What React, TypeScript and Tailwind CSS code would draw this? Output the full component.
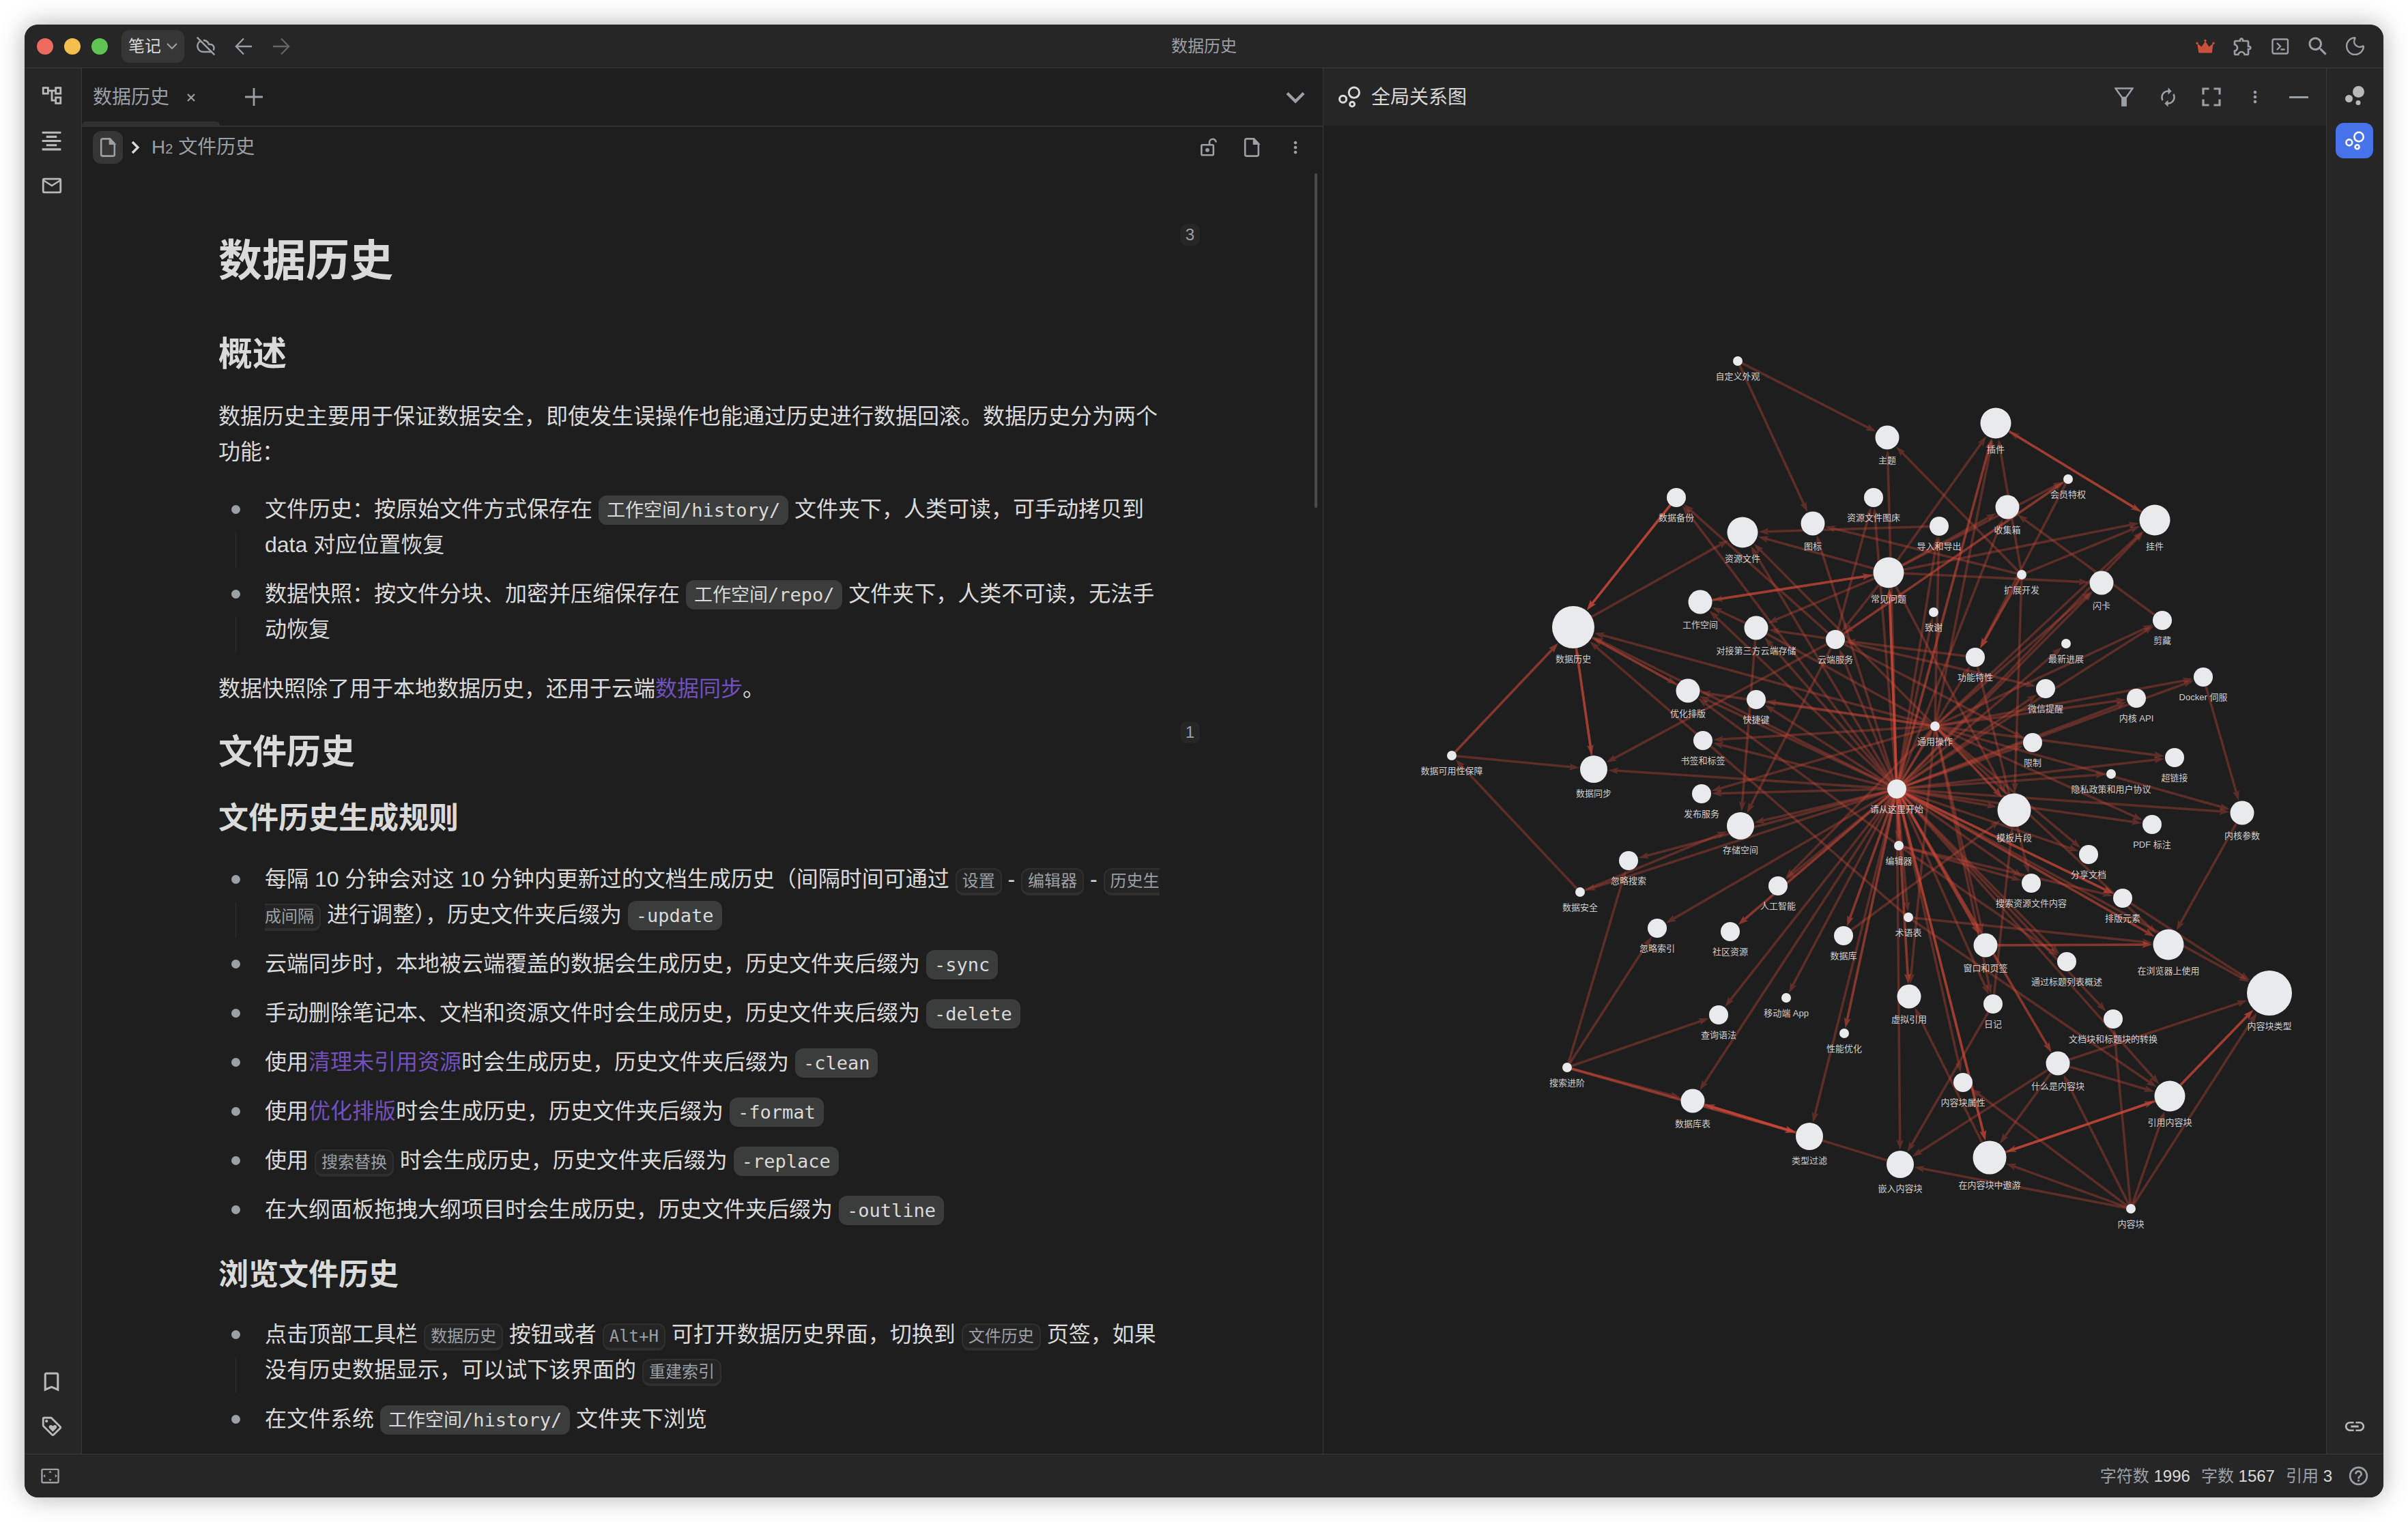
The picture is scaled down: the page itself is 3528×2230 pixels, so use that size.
import type { ReactNode } from "react";
import { CloudOff, Moon } from "lucide-react";

const ICONS = {
  tree: "M22 11V3h-7v3H9V3H2v8h7V8h2v10h4v3h7v-8h-7v3h-2V8h2v3h7zM7 9H4V5h3v4zm10 6h3v4h-3v-4zm0-10h3v4h-3V5z",
  outline: "M7 15v2h10v-2H7zm-4 6h18v-2H3v2zm0-8h18v-2H3v2zm4-6v2h10V7H7zM3 3v2h18V3H3z",
  mail: "M22 6c0-1.1-.9-2-2-2H4c-1.1 0-2 .9-2 2v12c0 1.1.9 2 2 2h16c1.1 0 2-.9 2-2V6zm-2 0l-8 5-8-5h16zm0 12H4V8l8 5 8-5v10z",
  bookmark: "M17 3H7c-1.1 0-1.99.9-1.99 2L5 21l7-3 7 3V5c0-1.1-.9-2-2-2zm0 15l-5-2.18L7 18V5h10v13z",
  tag: "M21.41 11.58l-9-9C12.05 2.22 11.55 2 11 2H4c-1.1 0-2 .9-2 2v7c0 .55.22 1.05.59 1.42l9 9c.36.36.86.58 1.41.58s1.05-.22 1.41-.59l7-7c.37-.36.59-.86.59-1.41s-.23-1.06-.59-1.42zM13 20.01L4 11V4h7v-.01l9 9-7 7.02zM6.5 5a1.5 1.5 0 1 0 0 3a1.5 1.5 0 1 0 0-3zM8.9 12.55c0 .57.23 1.07.6 1.45l3.5 3.5 3.5-3.5c.37-.37.6-.89.6-1.45 0-1.13-.92-2.05-2.05-2.05-.57 0-1.08.23-1.45.6l-.6.6-.6-.59c-.37-.38-.89-.61-1.45-.61-1.13 0-2.05.92-2.05 2.05z",
  link: "M3.9 12c0-1.71 1.39-3.1 3.1-3.1h4V7H7c-2.76 0-5 2.24-5 5s2.24 5 5 5h4v-1.9H7c-1.71 0-3.1-1.39-3.1-3.1zM8 13h8v-2H8v2zm9-6h-4v1.9h4c1.71 0 3.1 1.39 3.1 3.1s-1.39 3.1-3.1 3.1h-4V17h4c2.76 0 5-2.24 5-5s-2.24-5-5-5z",
  puzzle: "M10.5 4.5c.28 0 .5.22.5.5v2h6v6h2c.28 0 .5.22.5.5s-.22.5-.5.5h-2v6h-2.12c-.68-1.75-2.39-3-4.38-3s-3.7 1.25-4.38 3H4v-2.12c1.75-.68 3-2.39 3-4.38 0-1.99-1.24-3.7-2.99-4.38L4 7h6V5c0-.28.22-.5.5-.5m0-2C9.12 2.5 8 3.62 8 5H4c-1.1 0-1.99.9-1.99 2v3.8h.29c1.49 0 2.7 1.21 2.7 2.7s-1.21 2.7-2.7 2.7H2V20c0 1.1.9 2 2 2h3.8v-.3c0-1.49 1.21-2.7 2.7-2.7s2.7 1.21 2.7 2.7v.3H17c1.1 0 2-.9 2-2v-4c1.38 0 2.5-1.12 2.5-2.5S20.38 11 19 11V7c0-1.1-.9-2-2-2h-4c0-1.38-1.12-2.5-2.5-2.5z",
  search: "M15.5 14h-.79l-.28-.27C15.41 12.59 16 11.11 16 9.5 16 5.91 13.09 3 9.5 3S3 5.91 3 9.5 5.91 16 9.5 16c1.61 0 3.09-.59 4.23-1.57l.27.28v.79l5 4.99L20.49 19l-4.99-5zm-6 0C7.01 14 5 11.99 5 9.5S7.01 5 9.5 5 14 7.01 14 9.5 11.99 14 9.5 14z",
  refresh: "M12 6v3l4-4-4-4v3c-4.42 0-8 3.58-8 8 0 1.57.46 3.03 1.24 4.26L6.7 14.8c-.45-.83-.7-1.79-.7-2.8 0-3.31 2.69-6 6-6zm6.76 1.74L17.3 9.2c.44.84.7 1.79.7 2.8 0 3.31-2.69 6-6 6v-3l-4 4 4 4v-3c4.42 0 8-3.58 8-8 0-1.57-.46-3.03-1.24-4.26z",
  fullscreen: "M7 14H5v5h5v-2H7v-3zm-2-4h2V7h3V5H5v5zm12 7h-3v2h5v-5h-2v3zM14 5v2h3v3h2V5h-5z",
  more: "M12 8c1.1 0 2-.9 2-2s-.9-2-2-2-2 .9-2 2 .9 2 2 2zm0 2c-1.1 0-2 .9-2 2s.9 2 2 2 2-.9 2-2-.9-2-2-2zm0 6c-1.1 0-2 .9-2 2s.9 2 2 2 2-.9 2-2-.9-2-2-2z",
  help: "M11 18h2v-2h-2v2zm1-16C6.48 2 2 6.48 2 12s4.48 10 10 10 10-4.48 10-10S17.52 2 12 2zm0 18c-4.41 0-8-3.59-8-8s3.59-8 8-8 8 3.59 8 8-3.59 8-8 8zm0-14c-2.21 0-4 1.79-4 4h2c0-1.1.9-2 2-2s2 .9 2 2c0 2-3 1.75-3 5h2c0-2.25 3-2.5 3-5 0-2.21-1.79-4-4-4z",
  overscan: "M12.01 5.5L10 8h4l-1.99-2.5zM18 10v4l2.5-1.99L18 10zM6 10l-2.5 2.01L6 14v-4zm8 6h-4l2.01 2.5L14 16zm7-13H3c-1.1 0-2 .9-2 2v14c0 1.1.9 2 2 2h18c1.1 0 2-.9 2-2V5c0-1.1-.9-2-2-2zm0 16.01H3V4.99h18v14.02z",
};

function Icon({ name, size }: { name: keyof typeof ICONS; size: number }) {
  return (
    <svg width={size} height={size} viewBox="0 0 24 24" fill="currentColor" aria-hidden="true">
      <path d={ICONS[name]} />
    </svg>
  );
}

/** Line drawing in a 28-unit box. */
function Stroke({ size = 28, width = 2.4, children }: { size?: number; width?: number; children: ReactNode }) {
  return (
    <svg width={size} height={size} viewBox="0 0 28 28" fill="none" stroke="currentColor" strokeWidth={width} aria-hidden="true">
      {children}
    </svg>
  );
}

const GraphIcon = ({ size = 28 }: { size?: number }) => (
  <Stroke size={size} width={2.6}>
    <circle cx="20" cy="8.5" r="6.7" />
    <circle cx="5.8" cy="16.8" r="4.4" />
    <circle cx="17.6" cy="23.3" r="3" />
  </Stroke>
);

const FileIcon = () => (
  <Stroke width={2.6}>
    <path d="M17 1.4H6.2a2 2 0 0 0-2 2v21.200a2 2 0 0 0 2 2h15.600a2 2 0 0 0 2-2V8.500z" />
    <path d="M17 1.6v7.200h6.600z" fill="currentColor" />
  </Stroke>
);

function IconButton({ label, className = "", children }: { label: string; className?: string; children: ReactNode }) {
  return (
    <button type="button" aria-label={label} className={`flex h-12 shrink-0 items-center justify-center ${className}`}>
      {children}
    </button>
  );
}

function TopBar() {
  return (
    <header className="grid h-16 shrink-0 grid-cols-[1fr_auto_1fr] items-center border-b border-[#393939] bg-[#262626] text-[#9aa0a6]">
      <div className="flex items-center">
        <div className="flex gap-4 pl-[18px]">
          <button type="button" aria-label="关闭" className="size-6 rounded-full bg-[#ec6a5e]" />
          <button type="button" aria-label="最小化" className="size-6 rounded-full bg-[#f4bf4f]" />
          <button type="button" aria-label="缩放" className="size-6 rounded-full bg-[#61c554]" />
        </div>
        <button type="button" className="ml-5 flex h-12 w-[92px] items-center justify-center gap-2 rounded-xl bg-[#363636] text-2xl text-[#dadada]">
          笔记
          <svg width="16" height="10" viewBox="0 0 16 10" fill="none" stroke="#9aa0a6" strokeWidth="2.2" aria-hidden="true">
            <path d="M1 1l7 7 7-7" />
          </svg>
        </button>
        <div className="flex pl-1">
          <IconButton label="云端同步" className="w-[55px]">
            <CloudOff size={29} strokeWidth={2.1} />
          </IconButton>
          <IconButton label="后退" className="w-[55px]">
            <Stroke width={2.3}>
              <path d="M26 14H3M14 2.5L2.8 14 14 25.500" />
            </Stroke>
          </IconButton>
          <IconButton label="前进" className="w-[55px] text-[#62666a]">
            <Stroke width={2.3}>
              <path d="M2 14h23M14 2.500L25.200 14 14 25.500" />
            </Stroke>
          </IconButton>
        </div>
      </div>
      <div className="text-2xl">数据历史</div>
      <div className="flex justify-end pr-[14px]">
        <IconButton label="会员" className="w-[55px] text-[#c8503c]">
          <svg width="28" height="28" viewBox="0 0 28 28" fill="currentColor" aria-hidden="true">
            <path d="M4.200 23.500L2.300 9.500l6.200 5L14 6.500l5.500 8 6.200-5-1.900 14z" />
            <circle cx="2" cy="9.200" r="1.700" />
            <circle cx="14" cy="5.500" r="1.700" />
            <circle cx="26" cy="9.200" r="1.700" />
          </svg>
        </IconButton>
        <IconButton label="插件" className="w-[55px]">
          <Icon name="puzzle" size={32} />
        </IconButton>
        <IconButton label="命令面板" className="w-[55px]">
          <Stroke width={2.4}>
            <rect x="2.500" y="3.500" width="22.500" height="21" rx="2.200" />
            <path d="M9 9l5 5-5 5M14.500 18.500h6" />
          </Stroke>
        </IconButton>
        <IconButton label="搜索" className="w-[55px]">
          <Icon name="search" size={36} />
        </IconButton>
        <IconButton label="外观" className="w-[55px]">
          <Moon size={33} strokeWidth={1.8} />
        </IconButton>
      </div>
    </header>
  );
}

function DockButton({ label, active = false, children }: { label: string; active?: boolean; children: ReactNode }) {
  return (
    <button
      type="button"
      aria-label={label}
      aria-pressed={active}
      className={`flex h-[52px] w-[55px] items-center justify-center rounded-xl ${active ? "bg-[#4772e9] text-white" : ""}`}
    >
      {children}
    </button>
  );
}

const Code = ({ children }: { children: ReactNode }) => (
  <code className="rounded-xl bg-[#3b3d3c] px-3 py-1.5 font-['DejaVu_Sans_Mono','Noto_Sans_CJK_SC',monospace] text-[27px] leading-none">
    {children}
  </code>
);

const Kbd = ({ children }: { children: ReactNode }) => (
  <kbd className="rounded-xl border-2 border-b-4 border-[#2f2f2f] bg-[#242424] px-2 py-[3px] font-['DejaVu_Sans_Mono','Noto_Sans_CJK_SC',monospace] text-2xl leading-none text-[#9aa0a6]">
    {children}
  </kbd>
);

const Ref = ({ children }: { children: ReactNode }) => (
  <a href="#" className="text-[#7350bb]">
    {children}
  </a>
);

const Item = ({ children }: { children: ReactNode }) => (
  <li className="flex">
    <div className="flex w-[68px] shrink-0 flex-col items-start pl-[19px]">
      <span className="mt-[30px] size-[13px] shrink-0 rounded-full bg-[#9aa0a6]" />
      <span className="mt-[27px] mb-0.5 ml-1.5 w-px flex-1 bg-[#303030]" />
    </div>
    <div className="min-w-0 flex-1 py-2.5">{children}</div>
  </li>
);

const Count = ({ children }: { children: ReactNode }) => (
  <span className="absolute -top-3.5 -right-14 flex h-8 w-[29px] items-center justify-center rounded-[10px] bg-[#262626] text-2xl font-normal text-[#9aa0a6]">
    {children}
  </span>
);

function Article() {
  return (
    <article className="pt-24 pr-[236px] pl-[200px] text-[32px] leading-[52px] text-[#dadada]">
      <h1 className="relative text-[64px] leading-[80px] font-bold">
        数据历史<Count>3</Count>
      </h1>
      <h2 className="mt-[66px] text-[50px] leading-[62px] font-bold">概述</h2>
      <p className="mt-[34px]">数据历史主要用于保证数据安全，即使发生误操作也能通过历史进行数据回滚。数据历史分为两个功能：</p>
      <ul className="mt-[22px] mb-[25px]">
        <Item>
          文件历史：按原始文件方式保存在 <Code>工作空间/history/</Code> 文件夹下，人类可读，可手动拷贝到 data 对应位置恢复
        </Item>
        <Item>
          数据快照：按文件分块、加密并压缩保存在 <Code>工作空间/repo/</Code> 文件夹下，人类不可读，无法手动恢复
        </Item>
      </ul>
      <p>
        数据快照除了用于本地数据历史，还用于云端<Ref>数据同步</Ref>。
      </p>
      <h2 className="relative mt-[36px] text-[50px] leading-[62px] font-bold">
        文件历史<Count>1</Count>
      </h2>
      <h3 className="mt-[38px] text-[44px] leading-[56px] font-bold">文件历史生成规则</h3>
      <ul className="mt-[25px]">
        <Item>
          每隔 10 分钟会对这 10 分钟内更新过的文档生成历史（间隔时间可通过 <Kbd>设置</Kbd> - <Kbd>编辑器</Kbd> - <Kbd>历史生成间隔</Kbd> 进行调整），历史文件夹后缀为 <Code>-update</Code>
        </Item>
        <Item>
          云端同步时，本地被云端覆盖的数据会生成历史，历史文件夹后缀为 <Code>-sync</Code>
        </Item>
        <Item>
          手动删除笔记本、文档和资源文件时会生成历史，历史文件夹后缀为 <Code>-delete</Code>
        </Item>
        <Item>
          使用<Ref>清理未引用资源</Ref>时会生成历史，历史文件夹后缀为 <Code>-clean</Code>
        </Item>
        <Item>
          使用<Ref>优化排版</Ref>时会生成历史，历史文件夹后缀为 <Code>-format</Code>
        </Item>
        <Item>
          使用 <Kbd>搜索替换</Kbd> 时会生成历史，历史文件夹后缀为 <Code>-replace</Code>
        </Item>
        <Item>
          在大纲面板拖拽大纲项目时会生成历史，历史文件夹后缀为 <Code>-outline</Code>
        </Item>
      </ul>
      <h3 className="mt-[32px] text-[44px] leading-[56px] font-bold">浏览文件历史</h3>
      <ul className="mt-[23px]">
        <Item>
          点击顶部工具栏 <Kbd>数据历史</Kbd> 按钮或者 <Kbd>Alt+H</Kbd> 可打开数据历史界面，切换到 <Kbd>文件历史</Kbd> 页签，如果没有历史数据显示，可以试下该界面的 <Kbd>重建索引</Kbd>
        </Item>
        <Item>
          在文件系统 <Code>工作空间/history/</Code> 文件夹下浏览
        </Item>
      </ul>
    </article>
  );
}

function Editor() {
  return (
    <main className="flex min-h-0 min-w-0 flex-col border-r border-[#393939] text-[28px] text-[#9aa0a6]">
      <div className="flex h-[86px] shrink-0 items-stretch border-b-2 border-[#303030]">
        <div className="flex w-[202px] flex-col">
          <div className="flex flex-1 items-center pt-2 pl-4">
            <span>数据历史</span>
            <button type="button" aria-label="关闭页签" className="ml-[18px] flex size-7 items-center justify-center">
              <svg width="12" height="12" viewBox="0 0 12 12" stroke="currentColor" strokeWidth="2.200" aria-hidden="true">
                <path d="M1 1l10 10M11 1L1 11" />
              </svg>
            </button>
          </div>
          <div className="h-1.5 rounded-t-md bg-[#303030]" />
        </div>
        <button type="button" aria-label="新建页签" className="flex w-[100px] items-center justify-center">
          <Stroke width={2.8}>
            <path d="M14 1v26M1 14h26" />
          </Stroke>
        </button>
        <button type="button" aria-label="更多页签" className="ml-auto flex w-20 items-center justify-center">
          <Stroke width={4.4}>
            <path d="M2 8.500l12 12 12-12" />
          </Stroke>
        </button>
      </div>
      <div className="flex h-[60px] shrink-0 items-center pl-4">
        <button type="button" aria-label="文档" className="flex h-12 w-11 items-center justify-center rounded-xl bg-[#363636]">
          <FileIcon />
        </button>
        <svg className="ml-3 text-[#dadada]" width="14" height="20" viewBox="0 0 14 20" fill="none" stroke="currentColor" strokeWidth="3.400" aria-hidden="true">
          <path d="M2 2l8 8-8 8" />
        </svg>
        <a href="#" className="ml-4 flex items-baseline">
          <span>H</span>
          <span className="text-xl">2</span>
          <span className="ml-2">文件历史</span>
        </a>
        <div className="ml-auto flex pr-2">
          <IconButton label="解锁" className="w-16">
            <Stroke width={2.600}>
              <rect x="4.300" y="10.300" width="17.500" height="15" rx="1.500" />
              <circle cx="13" cy="17.800" r="1.600" fill="currentColor" />
              <path d="M16 10V6.500a4.800 4.800 0 0 1 9.600 0" />
            </Stroke>
          </IconButton>
          <IconButton label="文档信息" className="w-16">
            <FileIcon />
          </IconButton>
          <IconButton label="更多" className="w-16">
            <Icon name="more" size={28} />
          </IconButton>
        </div>
      </div>
      <div className="relative min-h-0 flex-1 overflow-hidden">
        <Article />
        <div className="absolute top-2 right-2 h-[26%] w-1 rounded-full bg-[#4b4b4b]" />
      </div>
    </main>
  );
}

/* id → x, y, radius, label */
const NODES: Record<string, [number, number, number, string]> = {
  look: [2546, 529, 7, "自定义外观"],
  theme: [2765, 641, 17.5, "主题"],
  plugin: [2924, 620, 22.5, "插件"],
  vip: [3030, 702, 7, "会员特权"],
  backup: [2456, 729, 14, "数据备份"],
  assets: [2553, 780, 22.5, "资源文件"],
  icon: [2656, 767, 17.5, "图标"],
  bed: [2745, 729, 14, "资源文件图床"],
  inbox: [2941, 743, 17.5, "收集箱"],
  io: [2841, 771, 14, "导入和导出"],
  widget: [3157, 762, 22.5, "挂件"],
  faq: [2767, 839, 22.5, "常见问题"],
  ext: [2962, 842, 7, "扩展开发"],
  card: [3079, 854, 17.5, "闪卡"],
  thanks: [2833, 897, 7, "致谢"],
  clip: [3168, 909, 14, "剪藏"],
  news: [3027, 943, 7, "最新进展"],
  feat: [2894, 963, 14, "功能特性"],
  wechat: [2997, 1009, 14, "微信提醒"],
  docker: [3228, 992, 14, "Docker 伺服"],
  api: [3130, 1023, 14, "内核 API"],
  ops: [2835, 1064, 7, "通用操作"],
  limit: [2978, 1088, 14, "限制"],
  hyper: [3186, 1110, 14, "超链接"],
  privacy: [3093, 1134, 7, "隐私政策和用户协议"],
  start: [2779, 1156, 14, "请从这里开始"],
  history: [2305, 919, 31, "数据历史"],
  space: [2491, 882, 17.5, "工作空间"],
  third: [2573, 920, 17.5, "对接第三方云端存储"],
  cloud: [2689, 937, 14, "云端服务"],
  typo: [2473, 1012, 17.5, "优化排版"],
  keys: [2573, 1025, 14, "快捷键"],
  marks: [2495, 1085, 14, "书签和标签"],
  avail: [2127, 1107, 7, "数据可用性保障"],
  sync: [2335, 1127, 20, "数据同步"],
  publish: [2493, 1163, 14, "发布服务"],
  storage: [2550, 1210, 20, "存储空间"],
  igsearch: [2386, 1261, 14, "忽略搜索"],
  safe: [2315, 1307, 7, "数据安全"],
  ai: [2605, 1298, 14, "人工智能"],
  igindex: [2428, 1360, 14, "忽略索引"],
  community: [2535, 1365, 14, "社区资源"],
  db: [2701, 1371, 14, "数据库"],
  mobile: [2617, 1462, 7, "移动端 App"],
  query: [2518, 1487, 14, "查询语法"],
  perf: [2702, 1514, 7, "性能优化"],
  adv: [2296, 1564, 7, "搜索进阶"],
  dbtable: [2480, 1613, 17.5, "数据库表"],
  filter: [2651, 1665, 20, "类型过滤"],
  editor: [2782, 1239, 7, "编辑器"],
  template: [2951, 1187, 24.5, "模板片段"],
  pdf: [3153, 1208, 14, "PDF 标注"],
  params: [3285, 1191, 17.5, "内核参数"],
  share: [3060, 1252, 14, "分享文档"],
  assetsearch: [2976, 1294, 14, "搜索资源文件内容"],
  elements: [3110, 1316, 14, "排版元素"],
  terms: [2796, 1344, 7, "术语表"],
  tabs: [2909, 1385, 17.5, "窗口和页签"],
  browser: [3177, 1384, 22.5, "在浏览器上使用"],
  summary: [3028, 1409, 14, "通过标题列表概述"],
  types: [3325, 1455, 33, "内容块类型"],
  virtual: [2797, 1460, 17.5, "虚拟引用"],
  diary: [2920, 1471, 14, "日记"],
  convert: [3096, 1493, 14, "文档块和标题块的转换"],
  what: [3015, 1558, 17.5, "什么是内容块"],
  attr: [2876, 1586, 14, "内容块属性"],
  refer: [3179, 1606, 22.5, "引用内容块"],
  embed: [2784, 1706, 20, "嵌入内容块"],
  roam: [2915, 1696, 24.5, "在内容块中遨游"],
  block: [3122, 1771, 7, "内容块"],
};

/* source → targets; a repeated target is a parallel link */
const LINKS: Record<string, string> = {
  start:
    "backup assets icon theme bed plugin plugin inbox io faq faq faq faq thanks space third cloud history typo keys marks sync publish storage igsearch safe ai igindex community community db db query dbtable mobile perf perf filter terms virtual virtual embed attr roam roam roam diary tabs tabs what what summary convert refer assetsearch elements elements elements browser browser types template share pdf params privacy hyper api docker limit clip wechat news card widget feat editor ops",
  ops: "io plugin card widget clip api docker hyper params pdf share template template browser tabs diary virtual assets history typo keys marks publish ai",
  look: "theme icon",
  backup: "history history history history",
  history: "assets typo sync sync",
  typo: "history",
  sync: "history",
  avail: "history history sync",
  safe: "avail storage",
  adv: "igsearch igindex query dbtable filter filter",
  dbtable: "filter filter",
  filter: "dbtable",
  embed: "dbtable",
  cloud: "backup bed third sync storage wechat limit vip",
  faq: "assets space third cloud vip plugin widget card inbox template",
  space: "faq faq",
  third: "space storage ops",
  vip: "cloud feat",
  feat: "cloud assetsearch",
  ext: "theme plugin widget template icon feat feat",
  clip: "inbox",
  plugin: "widget widget",
  widget: "plugin",
  io: "assets",
  docker: "params",
  params: "browser",
  terms: "history refer browser",
  editor: "typo assetsearch elements summary",
  db: "template",
  diary: "template embed",
  tabs: "browser browser",
  elements: "types",
  roam: "virtual refer refer",
  refer: "roam roam types types types",
  what: "types refer embed roam",
  block: "embed roam attr what refer types convert",
};

const round = (value: number) => Math.round(value * 10) / 10;

function Edge({ from, to }: { from: string; to: string }) {
  const [x1, y1, r1] = NODES[from];
  const [x2, y2, r2] = NODES[to];
  const length = Math.hypot(x2 - x1, y2 - y1);
  const ux = (x2 - x1) / length;
  const uy = (y2 - y1) / length;
  const at = (distance: number, side: number) =>
    `${round(x2 - ux * distance - uy * side)} ${round(y2 - uy * distance + ux * side)}`;
  return (
    <g opacity="0.35">
      <path d={`M${round(x1 + ux * r1)} ${round(y1 + uy * r1)}L${at(r2 + 8, 0)}`} strokeWidth="3.6" />
      <path
        d={`M${at(r2 + 1, 0)}L${at(r2 + 16, 5)}L${at(r2 + 13, 0)}L${at(r2 + 16, -5)}z`}
        fill="#d24a3a"
        stroke="none"
      />
    </g>
  );
}

function Graph() {
  return (
    <svg className="block h-full w-full" viewBox="1939 184 1469 1946" role="img" aria-label="全局关系图">
      <g stroke="#d24a3a">
        {Object.entries(LINKS).flatMap(([from, targets]) =>
          targets.split(" ").map((to, index) => <Edge key={`${from}-${to}-${index}`} from={from} to={to} />),
        )}
      </g>
      <g fill="#e8eaed">
        {Object.entries(NODES).map(([id, [x, y, r]]) => (
          <circle key={id} cx={x} cy={y} r={r} />
        ))}
      </g>
      <g fill="#cfcfcf" fontSize="13" textAnchor="middle">
        {Object.entries(NODES).map(([id, [x, y, r, label]]) => (
          <text key={id} x={x} y={y + r + 20}>
            {label}
          </text>
        ))}
      </g>
    </svg>
  );
}

function GraphPanel() {
  return (
    <section className="flex min-h-0 min-w-0 flex-col">
      <div className="flex h-[84px] shrink-0 items-center bg-[#262626] pr-2 pl-[22px] text-[28px] text-[#dadada]">
        <GraphIcon size={32} />
        <h2 className="ml-4 pt-0.5">全局关系图</h2>
        <div className="ml-auto flex text-[#9aa0a6]">
          <IconButton label="筛选" className="w-16">
            <Stroke width={2.400}>
              <path d="M1.500 1.500h25L16.500 15.500v11h-5v-11z" />
              <path d="M11.500 15h5v11.500h-5z" fill="currentColor" />
            </Stroke>
          </IconButton>
          <IconButton label="刷新" className="w-16">
            <Icon name="refresh" size={31} />
          </IconButton>
          <IconButton label="全屏" className="w-16">
            <Stroke width={3.2}>
              <path d="M2 10.500V2h8.500M17.500 2H26v8.500M26 17.500V26h-8.500M10.500 26H2v-8.500" />
            </Stroke>
          </IconButton>
          <IconButton label="更多" className="w-16">
            <Icon name="more" size={28} />
          </IconButton>
          <IconButton label="最小化" className="w-16">
            <span className="h-[3px] w-7 bg-current" />
          </IconButton>
        </div>
      </div>
      <div className="min-h-0 flex-1">
        <Graph />
      </div>
    </section>
  );
}

function Stat({ label, value }: { label: string; value: number }) {
  return (
    <span>
      {label} <span className="text-[#dadada]">{value}</span>
    </span>
  );
}

export default function App() {
  return (
    <div
      lang="zh-CN"
      className="flex h-screen flex-col bg-white p-9 font-['Liberation_Sans','Noto_Sans_CJK_SC',sans-serif]"
    >
      <div className="flex min-h-0 flex-1 flex-col overflow-hidden rounded-[20px] bg-[#1e1e1e] shadow-[0_0_36px_rgba(0,0,0,0.32)]">
        <TopBar />
        <div className="grid min-h-0 flex-1 grid-cols-[84px_1819fr_1469fr_84px] grid-rows-[minmax(0,1fr)]">
          <nav className="flex flex-col items-center gap-[14px] border-r border-[#393939] bg-[#262626] py-[14px] pr-1 text-[#b9b9b9]">
            <DockButton label="文档树">
              <Icon name="tree" size={34} />
            </DockButton>
            <DockButton label="大纲">
              <Icon name="outline" size={37} />
            </DockButton>
            <DockButton label="收集箱">
              <Icon name="mail" size={34} />
            </DockButton>
            <div className="flex-1" />
            <DockButton label="书签">
              <Icon name="bookmark" size={37} />
            </DockButton>
            <DockButton label="标签">
              <Icon name="tag" size={34} />
            </DockButton>
          </nav>
          <Editor />
          <GraphPanel />
          <nav className="flex flex-col items-center gap-[14px] border-l border-[#393939] bg-[#262626] py-[14px] pr-0.5 text-[#b9b9b9]">
            <DockButton label="关系图">
              <svg width="28" height="28" viewBox="0 0 28 28" fill="currentColor" aria-hidden="true">
                <circle cx="19.500" cy="8.500" r="8.500" />
                <circle cx="5.500" cy="18.500" r="5.500" />
                <circle cx="19" cy="24.500" r="3.500" />
              </svg>
            </DockButton>
            <DockButton label="全局关系图" active>
              <GraphIcon />
            </DockButton>
            <div className="flex-1" />
            <DockButton label="反向链接">
              <Icon name="link" size={34} />
            </DockButton>
          </nav>
        </div>
        <footer className="flex h-16 shrink-0 items-center border-t border-[#393939] bg-[#262626] pr-5 pl-[23px] text-2xl text-[#9aa0a6]">
          <button type="button" aria-label="隐藏停靠栏">
            <Icon name="overscan" size={29} />
          </button>
          <div className="ml-auto flex gap-4">
            <Stat label="字符数" value={1996} />
            <Stat label="字数" value={1567} />
            <Stat label="引用" value={3} />
          </div>
          <button type="button" aria-label="帮助" className="ml-[22px]">
            <Icon name="help" size={33} />
          </button>
        </footer>
      </div>
    </div>
  );
}
